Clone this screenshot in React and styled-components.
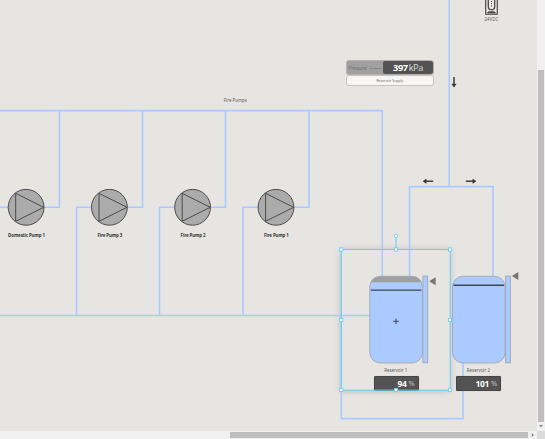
import React from "react";
import styled, { createGlobalStyle } from "styled-components";

const GlobalStyle = createGlobalStyle`
  body { margin: 0; overflow: hidden; background: #e6e5e1; }
`;

const Viewport = styled.div`
  display: grid;
  grid-template-columns: 537px 8px;
  grid-template-rows: 431px 8px;
  width: 545px;
  height: 439px;
  font-family: "Noto Sans", "Open Sans", sans-serif;
`;

const Canvas = styled.main`
  position: relative;
  overflow: hidden;
  background: #e6e5e1;
`;

const Drawing = styled.svg`
  position: absolute;
  inset: 0;
  width: 537px;
  height: 431px;
`;

const Label = styled.div`
  position: absolute;
  left: ${(p) => p.$x}px;
  top: ${(p) => p.$y}px;
  transform: translate(-50%, -50%);
  font-size: 4.4px;
  font-weight: ${(p) => (p.$bold ? 700 : 400)};
  letter-spacing: ${(p) => (p.$bold ? "-0.08px" : "normal")};
  line-height: 6px;
  color: ${(p) => (p.$bold ? "#333" : "#5d5d5d")};
  white-space: nowrap;
`;

const SensorCard = styled.section`
  position: absolute;
  left: 345.5px;
  top: 59.5px;
  width: 88.5px;
`;

const SensorRow = styled.div`
  display: flex;
  box-sizing: border-box;
  height: 15px;
  border: 1px solid #b0b0ae;
  border-radius: 3px;
  background: #a0a0a0;
  overflow: hidden;
`;

const SensorName = styled.div`
  display: flex;
  align-items: center;
  justify-content: space-between;
  flex: 1;
  padding: 1px 1.5px 0 2px;
  font-size: 4.6px;
  letter-spacing: -0.1px;
  color: #707070;
`;

const Dashes = styled.span`
  font-size: 4.5px;
  font-weight: 700;
  letter-spacing: 0.9px;
  color: #606060;
`;

const SensorValue = styled.div`
  display: flex;
  align-items: center;
  justify-content: center;
  gap: 1px;
  box-sizing: border-box;
  width: 50px;
  border-radius: 2px;
  background: #535353;
  color: #ddd;
  font: 400 9.2px/13px "Open Sans", sans-serif;
  letter-spacing: -0.4px;
`;

const Strong = styled.b`
  color: #fff;
  font-weight: 700;
`;

const SensorCaption = styled.div`
  box-sizing: border-box;
  height: 11px;
  border: 1px solid #c6c5c3;
  border-radius: 3px;
  background: #f7f6f5;
  color: #666;
  text-align: center;
  font-size: 3.4px;
  line-height: 9px;
`;

const LevelBox = styled.div`
  position: absolute;
  left: ${(p) => p.$x}px;
  top: 375.5px;
  display: flex;
  align-items: center;
  justify-content: flex-end;
  gap: 2px;
  box-sizing: border-box;
  width: 45px;
  height: 15px;
  padding-right: 3px;
  border: 1px solid #454545;
  border-radius: 1px;
  background: #535353;
  box-shadow: 0 0 1px #aaa;
  color: #ccc;
  font: 400 7.5px/13px "Open Sans", sans-serif;
  letter-spacing: -0.3px;

  ${Strong} {
    font-size: 8.5px;
  }
`;

const SelectionShade = styled.div`
  position: absolute;
  left: 341px;
  top: 249px;
  width: 109px;
  height: 141px;
  background: #e6e5e1;
  box-shadow: 0 1px 7px rgba(0, 0, 0, 0.2);
`;

const VerticalScroll = styled.div`
  display: flex;
  flex-direction: column;
  background: #f0f0f0;
`;

const VerticalThumb = styled.div`
  width: 6px;
  height: 352px;
  margin: 70px 0 0 1px;
  background: #bfbfbf;
`;

const HorizontalScroll = styled.div`
  display: flex;
  background: #f0f0f0;
`;

const HorizontalThumb = styled.div`
  width: 298px;
  height: 6px;
  margin: 1px 0 0 230px;
  background: #bfbfbf;
`;

const ScrollArrow = styled.svg`
  flex: none;
  width: 8px;
  height: 8px;
  margin: ${(p) => (p.$down ? "0" : "0 0 0 1px")};
`;

const ScrollCorner = styled.div`
  background: #dcdcdc;
`;

const PUMPS = [
  { x: 26.1, name: "Domestic Pump 1" },
  { x: 109.4, name: "Fire Pump 3" },
  { x: 192.6, name: "Fire Pump 2" },
  { x: 276, name: "Fire Pump 1" },
];

const HANDLES = [
  [341.3, 249.5], [396, 249.5], [450, 249.5],
  [341.3, 320], [450, 320],
  [341.3, 390], [396, 390], [450, 390],
];

function Pump({ x }) {
  return (
    <g transform={`translate(${x} 207.3)`} stroke="#4b4b4b" fill="#ababab" strokeWidth="1">
      <circle r="17.9" />
      <path d="M-10.4 -14 L17.6 0 L-10.4 14 Z" strokeLinejoin="round" />
    </g>
  );
}

function Tank({ x, level, pointer, capped }) {
  return (
    <g transform={`translate(${x} 276.3)`}>
      <rect width="52.6" height="86.7" rx="10.5" fill="#abcaff" />
      {capped && <path d="M0.6 6 Q4 0 11 0 H42 Q49 0 52 6 Z" fill="#9f9f9f" />}
      <rect width="52.6" height="86.7" rx="10.5" fill="none" stroke="#a1a7b2" strokeWidth="0.9" />
      <path d={`M1 ${level} H51.6`} stroke="#3d4656" strokeWidth="1.4" />
      <rect x="53.1" y="-0.2" width="4.8" height="86.7" fill="#abcaff" stroke="#a1a7b2" strokeWidth="0.9" />
      <path d={`M59.3 ${pointer} l6.5 -4 v8 Z`} fill="#777" />
    </g>
  );
}

function FlowArrow({ x, y, turn }) {
  return (
    <g transform={`translate(${x} ${y}) rotate(${turn})`}>
      <path d="M-5 0 H3.5" stroke="#333" strokeWidth="1.4" />
      <path d="M2 -2.2 L5.2 0 L2 2.2 Z" fill="#333" stroke="#333" strokeWidth="0.4" />
    </g>
  );
}

function PowerUnit() {
  return (
    <g fill="#e9e8e5" stroke="#494949">
      <rect x="485.7" y="-5" width="11.6" height="19.2" strokeWidth="1.2" />
      <rect x="488.3" y="-7" width="6.4" height="16.6" rx="3.2" strokeWidth="1.3" />
      <path d="M487.4 13 L488.8 11.4 H494.2 L495.6 13 Z" fill="#494949" strokeWidth="0.6" />
      <path d="M491.5 0.8 V6.5" strokeWidth="1" strokeDasharray="1 1.3" />
    </g>
  );
}

export default function App() {
  return (
    <Viewport>
      <GlobalStyle />
      <Canvas>
        <SelectionShade />
        <Drawing viewBox="0 0 537 431">
          <g fill="none" stroke="#abcaff" strokeWidth="1.6">
            <path d="M0 110.6 H382.3 V277" />
            <path d="M43 207.3 H59.5 V111" />
            <path d="M127 207.3 H142.5 V111" />
            <path d="M210 207.3 H225.5 V111" />
            <path d="M294 207.3 H309 V111" />
            <path d="M0 207.3 H9" />
            <path d="M92 207.3 H76.5 V315.5" />
            <path d="M175 207.3 H159.5 V315.5" />
            <path d="M259 207.3 H243 V315.5" />
            <path d="M0 315.5 H370" />
            <path d="M449.2 0 V186.6" />
            <path d="M409.6 277 V186.6 H493 V277" />
            <path d="M341.3 315.5 V418.6 H463 V363" />
          </g>
          {PUMPS.map((p) => <Pump key={p.name} x={p.x} />)}
          <Tank x={369.8} level={13.8} pointer={5} capped />
          <Tank x={452.5} level={8.9} pointer={-0.2} />
          <FlowArrow x={428.2} y={181.2} turn={180} />
          <FlowArrow x={470.8} y={181.2} turn={0} />
          <FlowArrow x={454} y={82} turn={90} />
          <PowerUnit />
        </Drawing>

        {PUMPS.map((p) => <Label key={p.name} $x={p.x + 0.4} $y={235} $bold>{p.name}</Label>)}
        <Label $x={235.3} $y={100}>Fire Pumps</Label>
        <Label $x={395.8} $y={370}>Reservoir 1</Label>
        <Label $x={478.4} $y={370}>Reservoir 2</Label>
        <Label $x={491.4} $y={19.2}>24VDC</Label>

        <SensorCard>
          <SensorRow>
            <SensorName>Pressure <Dashes>-----</Dashes></SensorName>
            <SensorValue><Strong>397</Strong>kPa</SensorValue>
          </SensorRow>
          <SensorCaption>Reservoir Supply</SensorCaption>
        </SensorCard>

        <LevelBox $x={373.5}><Strong>94</Strong>%</LevelBox>
        <LevelBox $x={456}><Strong>101</Strong>%</LevelBox>

        <Drawing viewBox="0 0 537 431">
          <g fill="none" stroke="#70cdf3" strokeWidth="1.1">
            <rect x="341.3" y="249.5" width="108.9" height="140.7" />
            <path d="M396 236 V249" />
          </g>
          <g fill="#fff" stroke="#70cdf3" strokeWidth="0.9">
            <circle cx="396" cy="235.8" r="1.7" />
            {HANDLES.map(([x, y]) => (
              <rect key={`${x}-${y}`} x={x - 1.6} y={y - 1.6} width="3.2" height="3.2" />
            ))}
          </g>
          <path d="M393.2 321.3 H398.8 M396 318.5 V324.1" stroke="#3d4656" strokeWidth="1" />
        </Drawing>
      </Canvas>
      <VerticalScroll>
        <VerticalThumb />
        <ScrollArrow $down viewBox="0 0 8 8"><path d="M2 3 H6 L4 5.3 Z" fill="#858585" /></ScrollArrow>
      </VerticalScroll>
      <HorizontalScroll>
        <HorizontalThumb />
        <ScrollArrow viewBox="0 0 8 8"><path d="M2.8 2 V6 L5 4 Z" fill="#858585" /></ScrollArrow>
      </HorizontalScroll>
      <ScrollCorner />
    </Viewport>
  );
}
